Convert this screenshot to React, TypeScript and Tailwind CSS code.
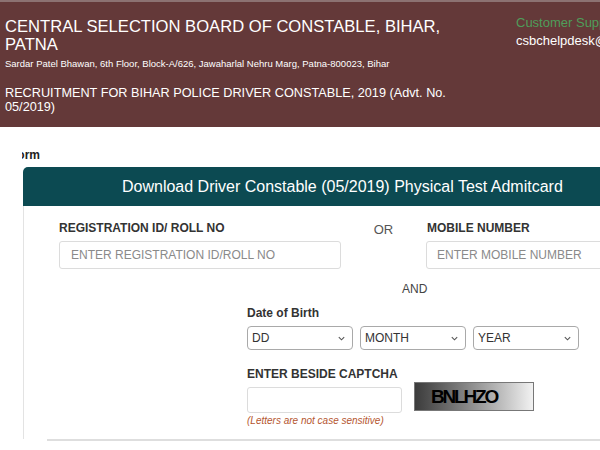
import React from 'react';

const ChevronDown = () => (
  <svg width="9" height="9" viewBox="0 0 10 10" fill="none" stroke="#555" strokeWidth="1.2">
    <path d="M2 3.5 L5 6.5 L8 3.5" />
  </svg>
);

const FakeSelect: React.FC<{ label: string }> = ({ label }) => (
  <div className="w-[106px] h-[24px] border border-[#a9a9a9] rounded-[4px] bg-white flex items-center justify-between pl-[4px] pr-[6px] text-[12px] text-[#333]">
    <span>{label}</span>
    <ChevronDown />
  </div>
);

const App: React.FC = () => {
  return (
    <div className="w-[600px] h-[450px] overflow-hidden bg-white font-['Liberation_Sans',Arial,sans-serif]">
      {/* Header */}
      <div className="h-[127px] bg-[#643939] border-t-[2px] border-[#8c7272] flex">
        <div className="w-[500px] shrink-0 pl-[5px] pt-[16px] text-white">
          <h1 className="w-[460px] text-[16.6px] leading-[18px]">CENTRAL SELECTION BOARD OF CONSTABLE, BIHAR, PATNA</h1>
          <p className="text-[9.5px] leading-[12px] mt-[4px]">
            Sardar Patel Bhawan, 6th Floor, Block-A/626, Jawaharlal Nehru Marg, Patna-800023, Bihar
          </p>
          <p className="w-[470px] text-[12.7px] leading-[14px] mt-[16px]">
            RECRUITMENT FOR BIHAR POLICE DRIVER CONSTABLE, 2019 (Advt. No. 05/2019)
          </p>
        </div>
        <div className="pl-[16px] pt-[12px] text-[13px] leading-[18px] whitespace-nowrap">
          <div className="text-[#4f9d5a]">Customer Support</div>
          <div className="text-white">csbchelpdesk@gmail.com</div>
        </div>
      </div>

      {/* Form title strip */}
      <div className="ml-[22px] mt-[21px] w-[40px] overflow-hidden">
        <span className="block -ml-[12px] text-[12px] leading-[14px] font-bold text-[#222]">Form</span>
      </div>

      {/* Card */}
      <div className="ml-[23px] mt-[5px] w-[700px]">
        <div className="h-[39px] bg-[#0c4a52] rounded-tl-[5px] flex items-center pl-[99px] text-white text-[16px]">
          Download Driver Constable (05/2019) Physical Test Admitcard
        </div>
        <div className="border-l border-[#e3e3e3] pb-[12px]">
          {/* Row 1 */}
          <div className="flex pl-[35px] pt-[15px]">
            <div className="w-[282px]">
              <div className="text-[12px] font-bold text-[#333] leading-[14px]">REGISTRATION ID/ ROLL NO</div>
              <div className="mt-[6px] h-[28px] border border-[#dcdcdc] rounded-[3px] flex items-center pl-[11px] text-[12px] text-[#8a8a8a]">
                ENTER REGISTRATION ID/ROLL NO
              </div>
            </div>
            <div className="w-[85px] text-center text-[13px] text-[#555] leading-[14px] pt-[2px]">OR</div>
            <div className="w-[282px]">
              <div className="text-[12px] font-bold text-[#333] leading-[14px] pl-[1px]">MOBILE NUMBER</div>
              <div className="mt-[6px] h-[28px] border border-[#dcdcdc] rounded-[3px] flex items-center pl-[10px] text-[12px] text-[#8a8a8a]">
                ENTER MOBILE NUMBER
              </div>
            </div>
          </div>

          {/* AND */}
          <div className="pl-[378px] mt-[13px] text-[12px] text-[#444] leading-[14px]">AND</div>

          {/* DOB */}
          <div className="pl-[223px] mt-[10px]">
            <div className="text-[12px] font-bold text-[#333] leading-[14px]">Date of Birth</div>
            <div className="mt-[6px] flex gap-[7px]">
              <FakeSelect label="DD" />
              <FakeSelect label="MONTH" />
              <FakeSelect label="YEAR" />
            </div>

            {/* Captcha */}
            <div className="mt-[17px] text-[12px] font-bold text-[#333] leading-[14px]">ENTER BESIDE CAPTCHA</div>
            <div className="flex items-start gap-[12px]">
              <div>
                <div className="mt-[6px] w-[155px] h-[26px] border border-[#dcdcdc] rounded-[3px]" />
                <div className="mt-[2px] text-[10px] italic text-[#b5562f] leading-[12px]">(Letters are not case sensitive)</div>
              </div>
              <div className="mt-[1px] w-[120px] h-[29px] border border-[#777] bg-gradient-to-r from-[#3c3c3c] to-[#f2f2f2] flex items-center pl-[16px]">
                <span className="text-[19px] leading-[20px] font-bold text-black tracking-[-2.2px]">BNLHZO</span>
              </div>
            </div>
          </div>
        </div>
        <div className="ml-[24px] h-[2px] bg-[#dedede]" />
      </div>
    </div>
  );
};

export default App;
